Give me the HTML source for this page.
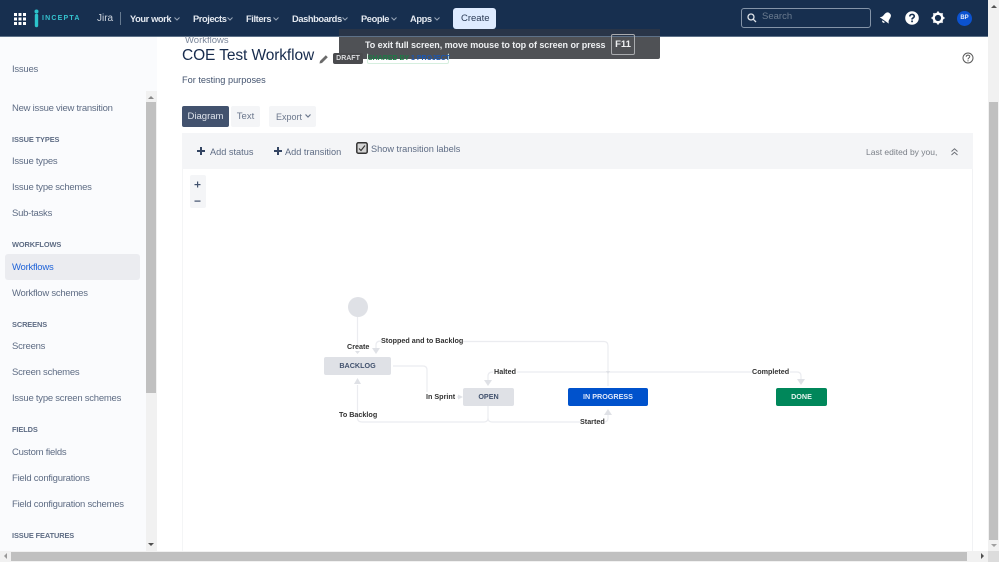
<!DOCTYPE html>
<html><head><meta charset="utf-8"><style>
html,body{margin:0;padding:0;width:999px;height:562px;overflow:hidden;background:#fff;font-family:"Liberation Sans",sans-serif}
.t{position:absolute;white-space:nowrap;line-height:14px}
.b{position:absolute}
.nav{color:#e4e9f0;font-size:9.300px;font-weight:bold;top:12px;letter-spacing:-.4px}
.s{color:#5e6c84;font-size:9.500px;left:12px;letter-spacing:-.24px}
.h{color:#5e6c84;font-size:7.400px;font-weight:bold;left:12px;letter-spacing:-.1px}
.l{color:#333;font-size:7.200px;font-weight:bold}
.st{position:absolute;border-radius:2px;text-align:center;font-size:7.200px;font-weight:bold;line-height:18px;height:18px}
.chev{position:absolute;top:17px}
</style></head><body>
<div class="b" style="left:0;top:0;width:999px;height:36px;background:#172f4f;border-bottom:1px solid #5d7188"></div>
<svg class="b" style="left:14px;top:13px" width="12" height="12" fill="#fff"><rect x="0" y="0" width="3" height="3"/><rect x="4.500" y="0" width="3" height="3"/><rect x="9" y="0" width="3" height="3"/><rect x="0" y="4.500" width="3" height="3"/><rect x="4.500" y="4.500" width="3" height="3"/><rect x="9" y="4.500" width="3" height="3"/><rect x="0" y="9" width="3" height="3"/><rect x="4.500" y="9" width="3" height="3"/><rect x="9" y="9" width="3" height="3"/></svg>
<svg class="b" style="left:33px;top:9px" width="8" height="19"><circle cx="3.500" cy="2.500" r="2" fill="#2cc4cc"/><path d="M3.500 6.500V16.500" stroke="#2cc4cc" stroke-width="3.400" stroke-linecap="round"/></svg>
<div class="t" style="left:42px;top:12px;color:#35c3cf;font-size:7px;font-weight:bold;letter-spacing:1.200px">INCEPTA</div>
<div class="t" style="left:97px;top:12px;color:#cdd4dd;font-size:10px">Jira</div>
<div class="b" style="left:120px;top:12px;width:1px;height:13px;background:#667a90"></div>
<div class="t nav" style="left:130px">Your work</div>
<div class="t nav" style="left:193px">Projects</div>
<div class="t nav" style="left:246px">Filters</div>
<div class="t nav" style="left:292px">Dashboards</div>
<div class="t nav" style="left:361px">People</div>
<div class="t nav" style="left:410px">Apps</div>
<svg class="chev" style="left:174px" width="6" height="4" fill="none" stroke="#9aa7b8"><path d="M.5 .5L3 3L5.500 .5"/></svg>
<svg class="chev" style="left:227px" width="6" height="4" fill="none" stroke="#9aa7b8"><path d="M.5 .5L3 3L5.500 .5"/></svg>
<svg class="chev" style="left:273px" width="6" height="4" fill="none" stroke="#9aa7b8"><path d="M.5 .5L3 3L5.500 .5"/></svg>
<svg class="chev" style="left:342px" width="6" height="4" fill="none" stroke="#9aa7b8"><path d="M.5 .5L3 3L5.500 .5"/></svg>
<svg class="chev" style="left:391px" width="6" height="4" fill="none" stroke="#9aa7b8"><path d="M.5 .5L3 3L5.500 .5"/></svg>
<svg class="chev" style="left:434px" width="6" height="4" fill="none" stroke="#9aa7b8"><path d="M.5 .5L3 3L5.500 .5"/></svg>
<div class="b" style="left:453px;top:8px;width:43px;height:21px;background:#deebff;border-radius:3px"></div>
<div class="t" style="left:461px;top:12px;color:#2a3a55;font-size:9.500px">Create</div>
<div class="b" style="left:741px;top:8px;width:128px;height:18px;border:1px solid #8494a8;border-radius:3px"></div>
<svg class="b" style="left:747px;top:13px" width="10" height="10" fill="none" stroke="#dfe4ea" stroke-width="1.300"><circle cx="4" cy="4" r="3"/><path d="M6.200 6.200L9 9"/></svg>
<div class="t" style="left:762px;top:10px;color:#6b7b8f;font-size:9.500px">Search</div>
<svg class="b" style="left:879px;top:11px" width="14" height="14" fill="#fff"><g transform="rotate(35 7 7)"><path d="M7 1C10 1 10.500 3.500 10.500 6C10.500 8 11.500 9 12.500 10H1.500C2.500 9 3.500 8 3.500 6C3.500 3.500 4 1 7 1Z"/><path d="M5.500 11H8.500A1.500 1.500 0 0 1 5.500 11Z"/></g></svg>
<svg class="b" style="left:905px;top:11px" width="14" height="14"><circle cx="7" cy="7" r="6.800" fill="#fff"/><path d="M4.800 5.500C4.800 2.700 9.300 2.700 9.300 5.300C9.300 6.800 7 6.800 7 8.500" fill="none" stroke="#172f4f" stroke-width="1.600"/><rect x="6.200" y="9.500" width="1.700" height="1.700" fill="#172f4f"/></svg>
<svg class="b" style="left:931px;top:11px" width="14" height="14"><circle cx="7" cy="7" r="4.300" fill="none" stroke="#fff" stroke-width="2.400"/><path d="M7 .5V3M7 11V13.500M.5 7H3M11 7H13.500M2.400 2.400L4 4M10 10L11.600 11.600M2.400 11.600L4 10M10 4L11.600 2.400" stroke="#fff" stroke-width="1.800"/></svg>
<div class="b" style="left:957px;top:10.5px;width:15px;height:15px;background:#0b52d0;border-radius:50%;color:#dfe8fa;font-size:6px;font-weight:bold;line-height:15px;text-align:center">BP</div>

<div class="b" style="left:0;top:37px;width:157px;height:514px;background:#fafbfd"></div>
<div class="b" style="left:146px;top:91px;width:11px;height:460px;background:#f1f1f1"></div>
<div class="b" style="left:146px;top:102px;width:10px;height:291px;background:#c0c0c0"></div>
<div class="b" style="left:148px;top:96px;border:3px solid transparent;border-bottom:3px solid #8a8a8a;border-top:0"></div>
<div class="b" style="left:148px;top:543px;border:3px solid transparent;border-top:3px solid #505050;border-bottom:0"></div>
<div class="t s" style="top:63px;font-size:9.500px">Issues</div>
<div class="t s" style="top:102px">New issue view transition</div>
<div class="t h" style="top:133px">ISSUE TYPES</div>
<div class="t s" style="top:155px">Issue types</div>
<div class="t s" style="top:181px">Issue type schemes</div>
<div class="t s" style="top:207px">Sub-tasks</div>
<div class="t h" style="top:238px">WORKFLOWS</div>
<div class="b" style="left:5px;top:254px;width:135px;height:26px;background:#ebecf0;border-radius:3px"></div>
<div class="t s" style="top:261px;color:#1f63d8">Workflows</div>
<div class="t s" style="top:287px">Workflow schemes</div>
<div class="t h" style="top:318px">SCREENS</div>
<div class="t s" style="top:340px">Screens</div>
<div class="t s" style="top:366px">Screen schemes</div>
<div class="t s" style="top:392px">Issue type screen schemes</div>
<div class="t h" style="top:423px">FIELDS</div>
<div class="t s" style="top:446px">Custom fields</div>
<div class="t s" style="top:472px">Field configurations</div>
<div class="t s" style="top:498px">Field configuration schemes</div>
<div class="t h" style="top:529px">ISSUE FEATURES</div>

<div class="t" style="left:185px;top:34px;color:#7a869a;font-size:9.500px">Workflows</div>
<div class="t" style="left:182px;top:47px;color:#172b4d;font-size:15.500px;line-height:18px;letter-spacing:-.1px">COE Test Workflow</div>
<svg class="b" style="left:319px;top:54px" width="10" height="10"><path d="M.5 9.500L1 7L6.800 1.200L8.800 3.200L3 9Z" fill="#6b6b6b"/></svg>
<div class="t" style="left:182px;top:73px;color:#44546f;font-size:9.200px">For testing purposes</div>

<div class="b" style="left:339px;top:37px;width:321px;height:22px;background:#4f5155;border-radius:0 0 2px 2px"></div>
<div class="b" style="left:339px;top:29px;width:321px;height:7px;background:#293548"></div>
<div class="b" style="left:333px;top:53px;width:30px;height:11px;background:#4a4b4e;border-radius:2px;color:#d8d9db;font-size:7px;font-weight:bold;line-height:11px;text-align:center">DRAFT</div>
<div class="b" style="left:367px;top:53px;width:80px;height:9px;border:1px solid #d6efdf;border-radius:2px;border-top-color:transparent;color:#1c7a45;font-size:7px;font-weight:bold;line-height:9px;text-align:center;white-space:nowrap">SHARED BY <span style="color:#1b56b0">1 PROJECT</span></div>
<div class="t" style="left:365px;top:38px;color:#eef0f2;font-size:9px;font-weight:bold;letter-spacing:-.06px">To exit full screen, move mouse to top of screen or press</div>
<div class="b" style="left:611px;top:34px;width:22px;height:19px;border:1px solid #a9abae;border-radius:2px;color:#eef0f2;font-size:9.500px;font-weight:bold;text-align:center;line-height:20px">F11</div>
<svg class="b" style="left:962px;top:52px" width="12" height="12" fill="none" stroke="#5a5a5a"><circle cx="6" cy="6" r="5"/><path d="M4.200 4.800C4.200 2.600 7.800 2.600 7.800 4.600C7.800 5.800 6 5.800 6 7.400M6 8.200V9.400"/></svg>

<div class="b" style="left:182px;top:106px;width:47px;height:21px;background:#42526e;border-radius:2px;color:#dfe4ec;font-size:9.500px;text-align:center;line-height:22px">Diagram</div>
<div class="b" style="left:231px;top:106px;width:29px;height:21px;background:#f4f5f7;border-radius:2px;color:#6b778c;font-size:9.500px;text-align:center;line-height:22px">Text</div>
<div class="b" style="left:269px;top:106px;width:47px;height:21px;background:#f4f5f7;border-radius:2px"></div>
<div class="t" style="left:276px;top:110px;color:#6b778c;font-size:9px">Export</div>
<svg class="b" style="left:305px;top:114px" width="6" height="4" fill="none" stroke="#6b778c" stroke-width="1.200"><path d="M.5 .5L3 3L5.500 .5"/></svg>

<div class="b" style="left:182px;top:133px;width:791px;height:418px;border-right:1px solid #f1f2f4;border-left:1px solid #f4f5f6;box-sizing:border-box"></div>
<div class="b" style="left:182px;top:133px;width:791px;height:36px;background:#f4f5f7"></div>
<svg class="b" style="left:197px;top:147px" width="8" height="8" fill="#344563"><rect x="3" y="0" width="2" height="8"/><rect x="0" y="3" width="8" height="2"/></svg>
<div class="t" style="left:210px;top:145px;color:#5e6c84;font-size:9.200px">Add status</div>
<svg class="b" style="left:274px;top:147px" width="8" height="8" fill="#344563"><rect x="3" y="0" width="2" height="8"/><rect x="0" y="3" width="8" height="2"/></svg>
<div class="t" style="left:285px;top:145px;color:#5e6c84;font-size:9.200px">Add transition</div>
<svg class="b" style="left:356px;top:142px" width="12" height="12" fill="none"><rect x=".8" y=".8" width="10.400" height="10.400" rx="1.500" fill="#d4d4d4" stroke="#333" stroke-width="1.500"/><path d="M3 6.500L5 8.500L9 3.500" stroke="#333" stroke-width="1.100"/></svg>
<div class="t" style="left:371px;top:142px;color:#5e6c84;font-size:9.200px">Show transition labels</div>
<div class="t" style="left:866px;top:145px;color:#7a7f87;font-size:8.500px">Last edited by you,</div>
<svg class="b" style="left:951px;top:148px" width="7" height="8" fill="none" stroke="#6b6f76" stroke-width="1"><path d="M.5 3.500L3.500 .8L6.500 3.500M.5 7L3.500 4.300L6.500 7"/></svg>

<div class="b" style="left:190px;top:175px;width:16px;height:33px;background:#f4f5f7;border-radius:2px"></div>
<svg class="b" style="left:194px;top:181px" width="8" height="24" fill="#42526e"><rect x=".5" y="3" width="6" height="1.200"/><rect x="3" y=".5" width="1.200" height="6"/><rect x=".5" y="19.500" width="6" height="1.200"/></svg>

<svg class="b" style="left:0;top:0" width="999" height="562" fill="none" stroke="#ebecf0" stroke-width="1.200">
<path d="M357.500 317V345"/>
<path d="M376 348V345Q376 341 381 341"/>
<path d="M463 341.500H604Q608 341.500 608 346V386"/>
<path d="M393 366H423Q427 366 427 370V392"/>
<path d="M488 381V376Q488 372 493 372"/>
<path d="M517 372H752"/>
<path d="M790 372H797Q801 372 801 376V381"/>
<path d="M488 406V418Q488 422 484 422H362Q357.500 422 357.500 418V385"/>
<path d="M488 418Q488 422 492 422H580"/>
<path d="M604 422Q608 422 608 418V414"/>
<path d="M457 397H460"/>
</svg>
<svg class="b" style="left:0;top:0" width="999" height="562" fill="#dfe1e6">
<path d="M376 354L372 348H380Z"/>
<path d="M488 386L484 380H492Z"/>
<path d="M801 385L797 379H805Z"/>
<path d="M357.500 378L354 384H361Z"/>
<path d="M608 409L604 415H612Z"/>
<path d="M463 397L458 394.500V399.500Z"/>
<path d="M357.500 354L355 351H360Z"/>
<path d="M608 374L606 371H610Z"/>
</svg>
<div class="b" style="left:348px;top:297px;width:20px;height:20px;background:#dfe1e6;border-radius:50%"></div>
<div class="st" style="left:324px;top:357px;width:67px;background:#dfe1e6;color:#42526e">BACKLOG</div>
<div class="st" style="left:463px;top:388px;width:51px;background:#dfe1e6;color:#42526e">OPEN</div>
<div class="st" style="left:568px;top:388px;width:80px;background:#0052cc;color:#dfe8fa">IN PROGRESS</div>
<div class="st" style="left:776px;top:388px;width:51px;background:#00875a;color:#e4f3ee">DONE</div>
<div class="t l" style="left:347px;top:340px">Create</div>
<div class="t l" style="left:381px;top:334px">Stopped and to Backlog</div>
<div class="t l" style="left:494px;top:365px">Halted</div>
<div class="t l" style="left:752px;top:365px">Completed</div>
<div class="t l" style="left:426px;top:390px">In Sprint</div>
<div class="t l" style="left:339px;top:408px">To Backlog</div>
<div class="t l" style="left:580px;top:415px">Started</div>

<div class="b" style="left:988px;top:0;width:11px;height:551px;background:#f1f1f1"></div>
<div class="b" style="left:989px;top:102px;width:9px;height:438px;background:#c0c0c0"></div>
<div class="b" style="left:991px;top:5px;border:3px solid transparent;border-bottom:3px solid #555;border-top:0"></div>
<div class="b" style="left:991px;top:544px;border:3px solid transparent;border-top:3px solid #a0a0a0;border-bottom:0"></div>
<div class="b" style="left:0;top:551px;width:999px;height:11px;background:#f1f1f1"></div>
<div class="b" style="left:11px;top:552px;width:956px;height:9px;background:#c0c0c0"></div>
<div class="b" style="left:4px;top:553px;border:3px solid transparent;border-right:3px solid #999;border-left:0"></div>
<div class="b" style="left:981px;top:553px;border:3px solid transparent;border-left:3px solid #505050;border-right:0"></div>
<div class="b" style="left:988px;top:551px;width:11px;height:11px;background:#dcdcdc"></div>
</body></html>
